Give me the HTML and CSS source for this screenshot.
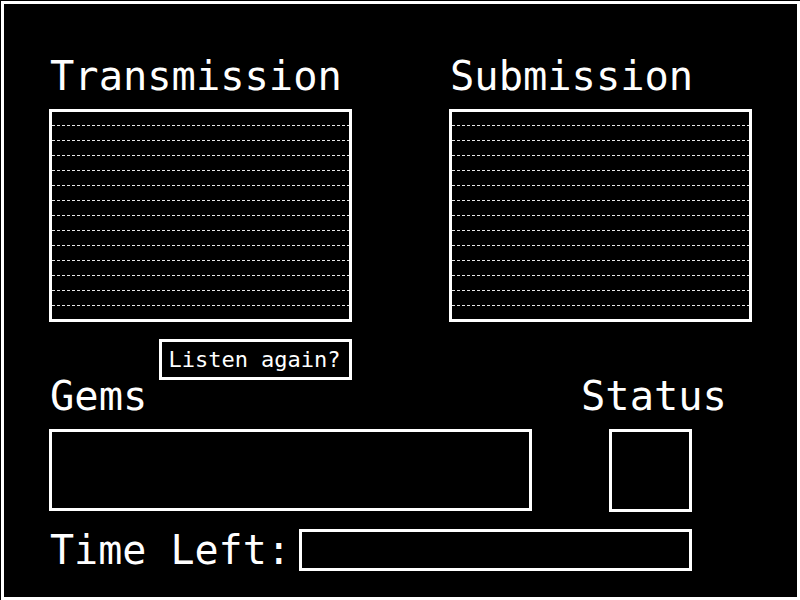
FILE: index.html
```html
<!DOCTYPE html>
<html>
<head>
<meta charset="utf-8">
<link rel="stylesheet" href="styles.css">
</head>
<body>
<div class="frame">
  <div class="top">
    <section class="panel">
      <h2 class="heading">Transmission</h2>
      <div class="box lined">
        <div class="line"></div><div class="line"></div><div class="line"></div><div class="line"></div><div class="line"></div><div class="line"></div><div class="line"></div><div class="line"></div><div class="line"></div><div class="line"></div><div class="line"></div><div class="line"></div><div class="line"></div>
      </div>
    </section>
    <section class="panel">
      <h2 class="heading">Submission</h2>
      <div class="box lined">
        <div class="line"></div><div class="line"></div><div class="line"></div><div class="line"></div><div class="line"></div><div class="line"></div><div class="line"></div><div class="line"></div><div class="line"></div><div class="line"></div><div class="line"></div><div class="line"></div><div class="line"></div>
      </div>
    </section>
  </div>
  <div class="listen-row">
    <button class="listen">Listen again?</button>
  </div>
  <div class="middle">
    <section class="gems">
      <h2 class="heading">Gems</h2>
      <div class="box gems-box"></div>
    </section>
    <section class="status">
      <h2 class="heading">Status</h2>
      <div class="box status-box"></div>
    </section>
  </div>
  <div class="time-row">
    <span class="time-label">Time Left:</span>
    <div class="box time-box"></div>
  </div>
</div>
</body>
</html>
```

FILE: styles.css
```css
html, body {
  margin: 0;
  background: #000;
}

.frame {
  margin: 1px 0 0 1px;
  width: 799px;
  height: 599px;
  box-sizing: border-box;
  border: 3px solid #fff;
  padding: 56px 0 0 45px;
  font-family: "DejaVu Sans Mono", monospace;
  color: #fff;
  background: #000;
}

.top {
  display: flex;
  gap: 97px;
}

.heading {
  margin: 0 0 17px;
  padding-left: 1px;
  font-size: 40.4px;
  font-weight: normal;
  line-height: 32px;
  white-space: nowrap;
}

.box {
  border: 3px solid #fff;
  box-sizing: border-box;
}

.lined {
  width: 303px;
  height: 213px;
  padding: 13px 0 0 0;
  display: flex;
  flex-direction: column;
  gap: 14px;
}

.line {
  height: 1px;
  background: repeating-linear-gradient(90deg, #e6e6e6 0 3px, transparent 3px 5px);
}

.listen-row {
  display: flex;
  margin-top: 17px;
}

.listen {
  margin-left: 110px;
  width: 193px;
  height: 41px;
  box-sizing: border-box;
  border: 3px solid #fff;
  background: #000;
  color: #fff;
  font-family: "DejaVu Sans Mono", monospace;
  font-size: 22px;
  line-height: 35px;
  padding: 0 2px 0 0;
  text-align: center;
}

.middle {
  display: flex;
  align-items: flex-start;
}

.gems {
  width: 483px;
}

.gems-box {
  width: 483px;
  height: 82px;
}

.status {
  margin-left: 48px;
}

.status-box {
  width: 83px;
  height: 83px;
  margin-left: 29px;
}

.time-row {
  display: flex;
  align-items: center;
  margin-top: 17px;
}

.time-label {
  width: 250px;
  padding-left: 1px;
  box-sizing: border-box;
  font-size: 40px;
  line-height: 32px;
  white-space: nowrap;
}

.time-box {
  width: 393px;
  height: 42px;
}
```
